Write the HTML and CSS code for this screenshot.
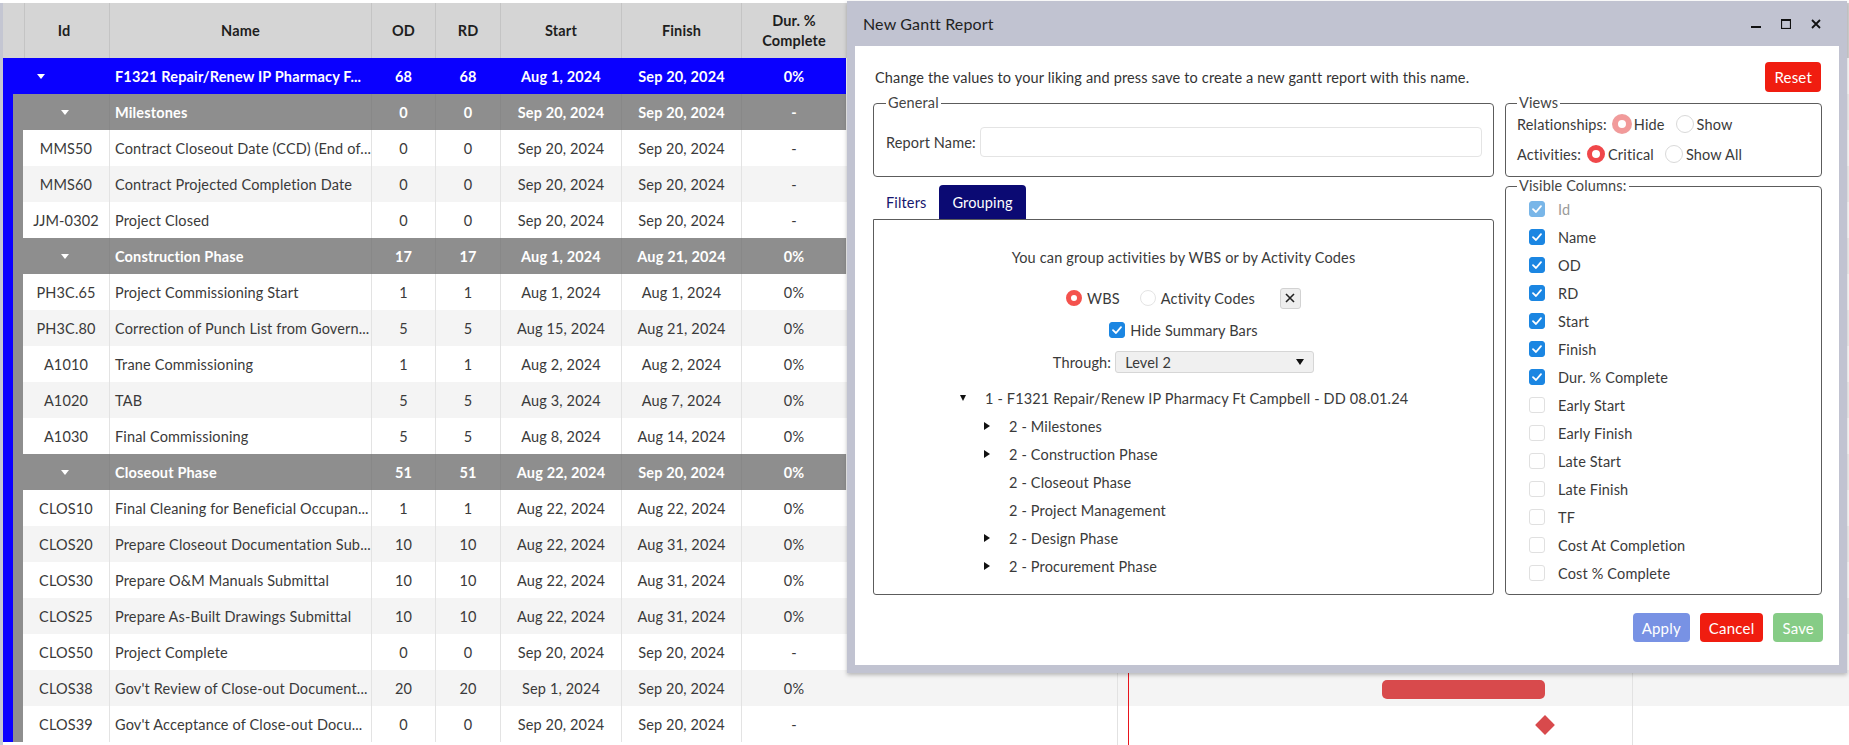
FILE: index.html
```html
<!DOCTYPE html>
<html lang="en">
<head>
<meta charset="utf-8">
<title>Gantt Report</title>
<link rel="stylesheet" href="styles.css">
</head>
<body>
<div class="app">
  <div class="table-pane">
    <div class="thead">
      <div class="th"></div>
      <div class="th">Id</div>
      <div class="th">Name</div>
      <div class="th">OD</div>
      <div class="th">RD</div>
      <div class="th">Start</div>
      <div class="th">Finish</div>
      <div class="th">Dur. %<br>Complete</div>
    </div>
    <div class="row row-project">
      <div class="c c-id"><span class="tri"></span></div>
      <div class="c c-name">F1321 Repair/Renew IP Pharmacy F...</div>
      <div class="c">68</div><div class="c">68</div>
      <div class="c">Aug 1, 2024</div><div class="c">Sep 20, 2024</div><div class="c">0%</div>
    </div>
    <div class="nest0">
      <div class="grp">
        <div class="row row-group">
          <div class="c c-id"><span class="tri"></span></div>
          <div class="c c-name">Milestones</div>
          <div class="c">0</div><div class="c">0</div>
          <div class="c">Sep 20, 2024</div><div class="c">Sep 20, 2024</div><div class="c">-</div>
        </div>
        <div class="nest1">
          <div class="row row-data"><div class="c c-id">MMS50</div><div class="c c-name">Contract Closeout Date (CCD) (End of...</div><div class="c">0</div><div class="c">0</div><div class="c">Sep 20, 2024</div><div class="c">Sep 20, 2024</div><div class="c">-</div></div>
          <div class="row row-data"><div class="c c-id">MMS60</div><div class="c c-name">Contract Projected Completion Date</div><div class="c">0</div><div class="c">0</div><div class="c">Sep 20, 2024</div><div class="c">Sep 20, 2024</div><div class="c">-</div></div>
          <div class="row row-data"><div class="c c-id">JJM-0302</div><div class="c c-name">Project Closed</div><div class="c">0</div><div class="c">0</div><div class="c">Sep 20, 2024</div><div class="c">Sep 20, 2024</div><div class="c">-</div></div>
        </div>
      </div>
      <div class="grp">
        <div class="row row-group">
          <div class="c c-id"><span class="tri"></span></div>
          <div class="c c-name">Construction Phase</div>
          <div class="c">17</div><div class="c">17</div>
          <div class="c">Aug 1, 2024</div><div class="c">Aug 21, 2024</div><div class="c">0%</div>
        </div>
        <div class="nest1">
          <div class="row row-data"><div class="c c-id">PH3C.65</div><div class="c c-name">Project Commissioning Start</div><div class="c">1</div><div class="c">1</div><div class="c">Aug 1, 2024</div><div class="c">Aug 1, 2024</div><div class="c">0%</div></div>
          <div class="row row-data"><div class="c c-id">PH3C.80</div><div class="c c-name">Correction of Punch List from Govern...</div><div class="c">5</div><div class="c">5</div><div class="c">Aug 15, 2024</div><div class="c">Aug 21, 2024</div><div class="c">0%</div></div>
          <div class="row row-data"><div class="c c-id">A1010</div><div class="c c-name">Trane Commissioning</div><div class="c">1</div><div class="c">1</div><div class="c">Aug 2, 2024</div><div class="c">Aug 2, 2024</div><div class="c">0%</div></div>
          <div class="row row-data"><div class="c c-id">A1020</div><div class="c c-name">TAB</div><div class="c">5</div><div class="c">5</div><div class="c">Aug 3, 2024</div><div class="c">Aug 7, 2024</div><div class="c">0%</div></div>
          <div class="row row-data"><div class="c c-id">A1030</div><div class="c c-name">Final Commissioning</div><div class="c">5</div><div class="c">5</div><div class="c">Aug 8, 2024</div><div class="c">Aug 14, 2024</div><div class="c">0%</div></div>
        </div>
      </div>
      <div class="grp">
        <div class="row row-group">
          <div class="c c-id"><span class="tri"></span></div>
          <div class="c c-name">Closeout Phase</div>
          <div class="c">51</div><div class="c">51</div>
          <div class="c">Aug 22, 2024</div><div class="c">Sep 20, 2024</div><div class="c">0%</div>
        </div>
        <div class="nest1">
          <div class="row row-data"><div class="c c-id">CLOS10</div><div class="c c-name">Final Cleaning for Beneficial Occupan...</div><div class="c">1</div><div class="c">1</div><div class="c">Aug 22, 2024</div><div class="c">Aug 22, 2024</div><div class="c">0%</div></div>
          <div class="row row-data"><div class="c c-id">CLOS20</div><div class="c c-name">Prepare Closeout Documentation Sub...</div><div class="c">10</div><div class="c">10</div><div class="c">Aug 22, 2024</div><div class="c">Aug 31, 2024</div><div class="c">0%</div></div>
          <div class="row row-data"><div class="c c-id">CLOS30</div><div class="c c-name">Prepare O&amp;M Manuals Submittal</div><div class="c">10</div><div class="c">10</div><div class="c">Aug 22, 2024</div><div class="c">Aug 31, 2024</div><div class="c">0%</div></div>
          <div class="row row-data"><div class="c c-id">CLOS25</div><div class="c c-name">Prepare As-Built Drawings Submittal</div><div class="c">10</div><div class="c">10</div><div class="c">Aug 22, 2024</div><div class="c">Aug 31, 2024</div><div class="c">0%</div></div>
          <div class="row row-data"><div class="c c-id">CLOS50</div><div class="c c-name">Project Complete</div><div class="c">0</div><div class="c">0</div><div class="c">Sep 20, 2024</div><div class="c">Sep 20, 2024</div><div class="c">-</div></div>
          <div class="row row-data"><div class="c c-id">CLOS38</div><div class="c c-name">Gov't Review of Close-out Document...</div><div class="c">20</div><div class="c">20</div><div class="c">Sep 1, 2024</div><div class="c">Sep 20, 2024</div><div class="c">0%</div></div>
          <div class="row row-data"><div class="c c-id">CLOS39</div><div class="c c-name">Gov't Acceptance of Close-out Docu...</div><div class="c">0</div><div class="c">0</div><div class="c">Sep 20, 2024</div><div class="c">Sep 20, 2024</div><div class="c">-</div></div>
        </div>
      </div>
    </div>
  </div>

  <div class="gantt-pane">
    <div class="g-head"></div>
    <div class="g-rows">
      <div class="g-row"></div><div class="g-row"></div><div class="g-row"></div><div class="g-row"></div>
      <div class="g-row"></div><div class="g-row"></div><div class="g-row"></div><div class="g-row"></div>
      <div class="g-row"></div><div class="g-row"></div><div class="g-row"></div><div class="g-row"></div>
      <div class="g-row"></div><div class="g-row"></div><div class="g-row"></div><div class="g-row"></div>
      <div class="g-row"></div><div class="g-row"></div><div class="g-row"></div>
    </div>
    <div class="vline vl-1"></div>
    <div class="vline vl-2"></div>
    <div class="today"></div>
    <div class="gbar"></div>
    <div class="gdiamond"></div>
  </div>
</div>

<div class="modal">
  <div class="m-title">
    <span>New Gantt Report</span>
    <div class="m-icons">
      <svg width="10" height="10" viewBox="0 0 10 10"><rect x="0" y="7" width="10" height="2" fill="#111"/></svg>
      <svg width="10" height="10" viewBox="0 0 10 10"><rect x="0.5" y="0.5" width="9" height="9" fill="none" stroke="#111" stroke-width="1.2"/><rect x="0" y="0" width="10" height="2" fill="#111"/></svg>
      <svg width="10" height="10" viewBox="0 0 10 10"><path d="M1 1 L9 9 M9 1 L1 9" stroke="#111" stroke-width="1.8" fill="none"/></svg>
    </div>
  </div>
  <div class="m-body">
    <div class="m-top">
      <p>Change the values to your liking and press save to create a new gantt report with this name.</p>
      <button class="btn btn-red">Reset</button>
    </div>
    <div class="m-grid">
      <fieldset class="fs fs-general">
        <legend>General</legend>
        <div class="field">
          <label>Report Name:</label>
          <div class="input"></div>
        </div>
      </fieldset>
      <fieldset class="fs fs-views">
        <legend>Views</legend>
        <div class="vrow">
          <span class="vlabel">Relationships:</span>
          <span class="rd rd-soft"></span><span class="rtext">Hide</span>
          <span class="rd"></span><span class="rtext">Show</span>
        </div>
        <div class="vrow">
          <span class="vlabel">Activities:</span>
          <span class="rd rd-on"></span><span class="rtext">Critical</span>
          <span class="rd"></span><span class="rtext">Show All</span>
        </div>
      </fieldset>
      <div class="left-col">
        <div class="tabs">
          <div class="tab">Filters</div>
          <div class="tab tab-active">Grouping</div>
        </div>
        <div class="panel">
          <div class="p-line">You can group activities by WBS or by Activity Codes</div>
          <div class="p-radios">
            <span class="rd rd-sm rd-on"></span><span class="p-rt">WBS</span>
            <span class="rd rd-sm rd-off"></span><span class="p-rt">Activity Codes</span>
            <span class="xbtn"><svg width="10" height="10" viewBox="0 0 10 10"><path d="M1 1 L9 9 M9 1 L1 9" stroke="#222" stroke-width="1.6" fill="none"/></svg></span>
          </div>
          <div class="p-check">
            <span class="cb cb-on"><svg width="16" height="16" viewBox="0 0 16 16"><path d="M4 8.2 L7 11 L12 5.2" stroke="#fff" stroke-width="1.8" fill="none" stroke-linecap="round" stroke-linejoin="round"/></svg></span>
            <span>Hide Summary Bars</span>
          </div>
          <div class="p-through">
            <span>Through:</span>
            <div class="select"><span>Level 2</span><span class="sel-arrow"></span></div>
          </div>
          <div class="tree">
            <div class="tn"><span class="tw"><span class="t-down"></span></span>1 - F1321 Repair/Renew IP Pharmacy Ft Campbell - DD 08.01.24</div>
            <div class="tn tn-child"><span class="tw"><span class="t-right"></span></span>2 - Milestones</div>
            <div class="tn tn-child"><span class="tw"><span class="t-right"></span></span>2 - Construction Phase</div>
            <div class="tn tn-child"><span class="tw"></span>2 - Closeout Phase</div>
            <div class="tn tn-child"><span class="tw"></span>2 - Project Management</div>
            <div class="tn tn-child"><span class="tw"><span class="t-right"></span></span>2 - Design Phase</div>
            <div class="tn tn-child"><span class="tw"><span class="t-right"></span></span>2 - Procurement Phase</div>
          </div>
        </div>
      </div>
      <fieldset class="fs fs-cols">
        <legend>Visible Columns:</legend>
        <div class="ci ci-dis"><span class="cb cb-dis"><svg width="16" height="16" viewBox="0 0 16 16"><path d="M4 8.2 L7 11 L12 5.2" stroke="#fff" stroke-width="1.8" fill="none" stroke-linecap="round" stroke-linejoin="round"/></svg></span>Id</div>
        <div class="ci"><span class="cb cb-on"><svg width="16" height="16" viewBox="0 0 16 16"><path d="M4 8.2 L7 11 L12 5.2" stroke="#fff" stroke-width="1.8" fill="none" stroke-linecap="round" stroke-linejoin="round"/></svg></span>Name</div>
        <div class="ci"><span class="cb cb-on"><svg width="16" height="16" viewBox="0 0 16 16"><path d="M4 8.2 L7 11 L12 5.2" stroke="#fff" stroke-width="1.8" fill="none" stroke-linecap="round" stroke-linejoin="round"/></svg></span>OD</div>
        <div class="ci"><span class="cb cb-on"><svg width="16" height="16" viewBox="0 0 16 16"><path d="M4 8.2 L7 11 L12 5.2" stroke="#fff" stroke-width="1.8" fill="none" stroke-linecap="round" stroke-linejoin="round"/></svg></span>RD</div>
        <div class="ci"><span class="cb cb-on"><svg width="16" height="16" viewBox="0 0 16 16"><path d="M4 8.2 L7 11 L12 5.2" stroke="#fff" stroke-width="1.8" fill="none" stroke-linecap="round" stroke-linejoin="round"/></svg></span>Start</div>
        <div class="ci"><span class="cb cb-on"><svg width="16" height="16" viewBox="0 0 16 16"><path d="M4 8.2 L7 11 L12 5.2" stroke="#fff" stroke-width="1.8" fill="none" stroke-linecap="round" stroke-linejoin="round"/></svg></span>Finish</div>
        <div class="ci"><span class="cb cb-on"><svg width="16" height="16" viewBox="0 0 16 16"><path d="M4 8.2 L7 11 L12 5.2" stroke="#fff" stroke-width="1.8" fill="none" stroke-linecap="round" stroke-linejoin="round"/></svg></span>Dur. % Complete</div>
        <div class="ci"><span class="cb"></span>Early Start</div>
        <div class="ci"><span class="cb"></span>Early Finish</div>
        <div class="ci"><span class="cb"></span>Late Start</div>
        <div class="ci"><span class="cb"></span>Late Finish</div>
        <div class="ci"><span class="cb"></span>TF</div>
        <div class="ci"><span class="cb"></span>Cost At Completion</div>
        <div class="ci"><span class="cb"></span>Cost % Complete</div>
      </fieldset>
    </div>
    <div class="m-foot">
      <button class="btn btn-blue">Apply</button>
      <button class="btn btn-red">Cancel</button>
      <button class="btn btn-green">Save</button>
    </div>
  </div>
</div>
</body>
</html>
```

FILE: styles.css
```css
* { box-sizing: border-box; }
html, body { margin: 0; padding: 0; }
body {
  font-family: Lato, "Liberation Sans", sans-serif;
  font-size: 14.5px;
  letter-spacing: 0.15px;
  color: #333;
  background: #fff;
  width: 1849px;
  height: 745px;
  overflow: hidden;
  position: relative;
}

.app { display: flex; height: 745px; padding-top: 3px; }

/* ---------- table ---------- */
.table-pane { width: 846px; flex: none; border-left: 3px solid #c4c6d2; }

.thead {
  display: grid;
  grid-template-columns: 21px 85px 262px 64px 65px 121px 120px 105px;
  height: 55px;
  background: #d5d5d5;
}
.th {
  display: flex; align-items: center; justify-content: center;
  text-align: center; font-weight: 700; color: #1e1e1e; line-height: 20px;
}
.th + .th { border-left: 1px solid #c4c4c4; }
.th:nth-child(2) { padding-right: 6px; }

.row {
  display: grid;
  grid-template-columns: 1fr 262px 64px 65px 121px 120px 105px;
  height: 36px;
}
.c {
  display: flex; align-items: center; justify-content: center;
  white-space: nowrap; overflow: hidden;
}
.c + .c { border-left: 1px solid #e3e3e3; }
.c-name { justify-content: flex-start; padding-left: 5px; }

.row-project { background: #0a00ff; color: #fff; font-weight: 700; }
.row-project .c + .c { border-left-color: transparent; }
.row-project .c-id { justify-content: flex-start; padding-left: 34px; }

.row-group { background: #8e8e8e; color: #fff; font-weight: 700; }
.row-group .c + .c { border-left-color: #888; }
.row-group .c-id { padding-left: 8px; }

.tri {
  width: 0; height: 0;
  border-left: 4px solid transparent;
  border-right: 4px solid transparent;
  border-top: 5px solid #fff;
}

.nest0 { border-left: 10px solid #0a00ff; }
.nest1 { border-left: 10px solid #8e8e8e; }
.row-data { background: #fff; color: #3a3a3a; }
.row-data:nth-child(even) { background: #f4f4f4; }

/* ---------- gantt ---------- */
.gantt-pane { flex: 1; position: relative; overflow: hidden; }
.g-head { height: 55px; background: #d5d5d5; }
.g-row { height: 36px; background: #fff; }
.g-row:nth-child(even) { background: #f4f4f4; }
.vline { position: absolute; top: 0; bottom: 0; width: 1px; background: #e2e2e2; }
.vl-1 { left: 271px; }
.vl-2 { left: 786px; }
.today { position: absolute; top: 0; bottom: 0; left: 282px; width: 1px; background: #e8141b; }
.gbar {
  position: absolute; left: 536px; top: 677px; width: 163px; height: 19px;
  background: #d84a4c; border-radius: 5px;
}
.gdiamond {
  position: absolute; left: 692px; top: 715px; width: 14px; height: 14px;
  background: #d84a4c; transform: rotate(45deg);
}

/* ---------- modal ---------- */
.modal {
  position: absolute; left: 847px; top: 1px; width: 1000px; height: 672px;
  background: #c1c3d1;
  padding: 0 8px 8px;
  display: flex; flex-direction: column;
  box-shadow: 0 2px 4px rgba(0,0,0,0.25);
}
.m-title {
  height: 45px; flex: none;
  display: flex; align-items: center;
  padding: 0 18px 0 8px;
  font-size: 16px; color: #222;
}
.m-icons { margin-left: auto; display: flex; gap: 20px; align-items: center; }
.m-icons svg { display: block; }

.m-body {
  flex: 1; background: #fff;
  padding: 16px 17px 0 18px;
  display: flex; flex-direction: column;
}
.m-top { display: flex; align-items: center; justify-content: space-between; height: 30px; }
.m-top p { margin: 0 0 0 2px; color: #333; }

.btn {
  border: none; border-radius: 4px; color: #fff;
  font-family: inherit; font-size: 15px; letter-spacing: 0.2px; padding: 0 9px; height: 30px;
}
.btn-red { background: #f01d10; }
.btn-blue { background: #7892e4; }
.btn-green { background: #86cc86; }
.m-top .btn { margin-right: 1px; }

.m-grid {
  display: grid;
  grid-template-columns: 621px 317px;
  column-gap: 11px;
  margin-top: 2px;
}

.fs {
  margin: 0; min-width: 0;
  border: 1px solid #5c5c5c; border-radius: 4px;
}
.fs legend { padding: 0 2px; line-height: 18px; color: #444; }

.fs-general { padding: 15px 11px 18px 12px; }
.field { display: flex; align-items: center; }
.field label { color: #3a3a3a; }
.input {
  flex: 1; height: 30px; margin-left: 4px;
  border: 1px solid #e4e4e4; border-radius: 4px; background: #fff;
}

.fs-views { padding: 0 11px 6px; }
.vrow { display: flex; align-items: center; height: 28px; margin-bottom: 2px; color: #3a3a3a; }
.vrow:first-of-type { margin-top: -2px; }
.vlabel { margin-right: 6px; }
.rtext { margin-left: 3px; margin-right: 11px; }

.rd {
  width: 18px; height: 18px; flex: none; border-radius: 50%;
  border: 1px solid #d9d9d9; background: #fff;
}
.rd-on { border: 5px solid #f0474a; }
.rd-soft { border: 5px solid #f29a9a; box-shadow: 0 0 0 1px #ee9d9d; }
.rd-sm { width: 16px; height: 16px; }
.rd-sm.rd-on { border-color: #f4524d; }

.left-col { display: flex; flex-direction: column; }
.tabs { display: flex; height: 34px; margin-top: 8px; }
.tab {
  display: flex; align-items: center; padding: 0 13px;
  color: #16166e; border-radius: 4px 4px 0 0;
}
.tab-active { background: #0b0a73; color: #fff; }

.panel {
  flex: 1;
  border: 1px solid #5c5c5c; border-radius: 0 3px 3px 3px;
  padding-top: 27px;
  color: #3a3a3a;
}
.p-line { height: 22px; line-height: 22px; text-align: center; }
.p-radios {
  display: flex; align-items: center; justify-content: center;
  height: 22px; margin-top: 18px;
}
.p-rt { margin-left: 5px; margin-right: 25px; }
.rd-off { border-color: #e4e4e4; }
.p-radios .p-rt:nth-of-type(2) { margin-right: 20px; }
.xbtn {
  width: 21px; height: 21px; display: flex; align-items: center; justify-content: center;
  background: #eeeeee; border: 1px solid #d2d2d2; border-radius: 3px;
}
.p-check {
  display: flex; align-items: center; justify-content: center; gap: 5px;
  height: 22px; margin-top: 10px;
}
.p-through {
  display: flex; align-items: center; justify-content: center; gap: 4px;
  height: 22px; margin-top: 10px;
}
.select {
  width: 199px; height: 22px;
  display: flex; align-items: center; justify-content: space-between;
  padding: 0 9px 0 9px;
  background: #f0f0f0; border: 1px solid #d6d6d6; border-radius: 3px;
}
.sel-arrow {
  width: 0; height: 0;
  border-left: 4px solid transparent; border-right: 4px solid transparent;
  border-top: 6px solid #111;
}

.tree { margin-top: 11px; padding-left: 86px; }
.tn { height: 28px; display: flex; align-items: center; white-space: nowrap; }
.tn-child { padding-left: 24px; }
.tw { width: 25px; flex: none; display: flex; align-items: center; }
.t-down {
  width: 0; height: 0;
  border-left: 3.5px solid transparent; border-right: 3.5px solid transparent;
  border-top: 6px solid #111;
}
.t-right {
  width: 0; height: 0;
  border-top: 4px solid transparent; border-bottom: 4px solid transparent;
  border-left: 6px solid #111;
}

.cb {
  width: 16px; height: 16px; flex: none; border-radius: 3px;
  border: 1px solid #e0e0e0; background: #fff;
  display: flex; align-items: center; justify-content: center;
  overflow: hidden;
}
.cb svg { display: block; flex: none; }
.cb-on { background: #1b86e2; border-color: #1b86e2; }
.cb-dis { background: #79b6e8; border-color: #79b6e8; }

.fs-cols { padding: 0 11px 7px; }
.ci {
  display: flex; align-items: center; height: 28px;
  margin-left: 12px; gap: 13px; color: #3a3a3a;
}
.ci-dis { color: #9a9a9a; }

.m-foot {
  display: flex; justify-content: flex-end; gap: 10px;
  margin-top: 18px; margin-right: -1px;
}
.m-foot .btn { height: 29px; }
```
